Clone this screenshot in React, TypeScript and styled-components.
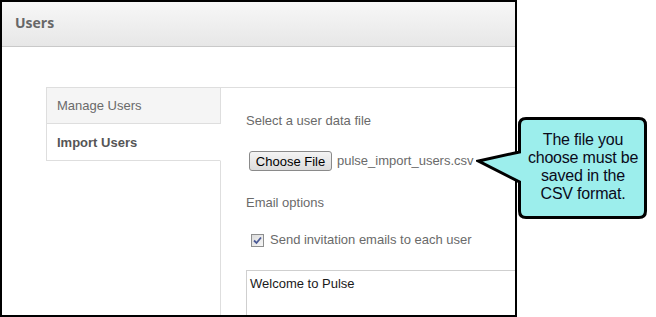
import styled, { createGlobalStyle } from 'styled-components';

const GlobalStyle = createGlobalStyle`
	html, body {
		margin: 0;
		padding: 0;
		background: #fff;
	}
	body {
		font-family: 'Liberation Sans', Arial, sans-serif;
	}
`;

const tabs = [
	{ label: 'Manage Users', active: false },
	{ label: 'Import Users', active: true },
];

function CheckMark() {
	return (
		<svg width='9' height='9' viewBox='0 0 9 9'>
			<path
				d='M1 4.5 L3.5 7 L8 1.5'
				fill='none'
				stroke='#4b5a96'
				strokeWidth='1.8'
			/>
		</svg>
	);
}

function CalloutShape() {
	return (
		<svg width='176' height='112' viewBox='0 0 176 112'>
			<path
				d='M50 6.5 H163 Q169.5 6.5 169.5 13 V99 Q169.5 105.5 163 105.5 H50 Q43.5 105.5 43.5 99 V70 L2.5 49 L43.5 40 V13 Q43.5 6.5 50 6.5 Z'
				fill='#9ceeec'
				stroke='#000'
				strokeWidth='3'
				strokeLinejoin='miter'
			/>
		</svg>
	);
}

export default function App() {
	return (
		<>
			<GlobalStyle />
			<Page>
				<Frame>
					<Header>Users</Header>
					<Body>
						<TabList>
							{tabs.map((tab) => (
								<Tab key={tab.label} $active={tab.active}>
									{tab.label}
								</Tab>
							))}
						</TabList>
						<Panel>
							<Label>Select a user data file</Label>
							<FileRow>
								<FileButton type='button'>Choose File</FileButton>
								<FileName>pulse_import_users.csv</FileName>
							</FileRow>
							<SectionLabel>Email options</SectionLabel>
							<CheckRow>
								<CheckBox>
									<CheckMark />
								</CheckBox>
								Send invitation emails to each user
							</CheckRow>
							<Message readOnly defaultValue='Welcome to Pulse' />
						</Panel>
					</Body>
				</Frame>
				<Callout>
					<CalloutShape />
					<CalloutText>
						The file you
						<br />
						choose must be
						<br />
						saved in the
						<br />
						CSV format.
					</CalloutText>
				</Callout>
			</Page>
		</>
	);
}

const Page = styled.div`
	position: relative;
	width: 656px;
	height: 317px;
	overflow: hidden;
`;

const Frame = styled.div`
	box-sizing: border-box;
	width: 517px;
	height: 317px;
	border: 2px solid #000;
	overflow: hidden;
	display: flex;
	flex-direction: column;
`;

const Header = styled.div`
	box-sizing: border-box;
	flex-shrink: 0;
	height: 45px;
	padding: 0 0 3px 13px;
	display: flex;
	align-items: center;
	background: linear-gradient(#f7f7f7, #e7e7e7);
	border-bottom: 1px solid #c9c9c9;
	font-family: 'Open Sans', sans-serif;
	font-weight: 700;
	font-size: 14px;
	color: #676767;
`;

const Body = styled.div`
	flex: 1;
	min-height: 0;
	display: flex;
	padding: 40px 0 0 44px;
`;

const TabList = styled.div`
	width: 175px;
	flex-shrink: 0;
	display: flex;
	flex-direction: column;
`;

const Tab = styled.div<{ $active: boolean }>`
	position: relative;
	box-sizing: border-box;
	flex-shrink: 0;
	height: 37px;
	padding-left: 10px;
	display: flex;
	align-items: center;
	border: 1px solid #dedede;
	border-top: ${(p) => (p.$active ? 'none' : '1px solid #dedede')};
	border-right-color: ${(p) => (p.$active ? '#fff' : '#dedede')};
	background: ${(p) => (p.$active ? '#fff' : '#f5f5f5')};
	z-index: ${(p) => (p.$active ? 1 : 0)};
	font-size: 13px;
	font-weight: ${(p) => (p.$active ? 700 : 400)};
	color: ${(p) => (p.$active ? '#555' : '#6a6a6a')};
`;

const Panel = styled.div`
	flex: 1;
	margin-left: -1px;
	padding: 25px 0 0 25px;
	border-top: 1px solid #dedede;
	border-left: 1px solid #dedede;
	display: flex;
	flex-direction: column;
	align-items: flex-start;
	font-size: 13px;
	line-height: 16px;
	color: #6a6a6a;
`;

const Label = styled.div``;

const FileRow = styled.div`
	margin-top: 22px;
	display: flex;
	align-items: center;
	gap: 5px;
	padding-left: 3px;
`;

const FileButton = styled.button`
	box-sizing: border-box;
	height: 20px;
	width: 83px;
	padding: 0;
	border: 1px solid #8a8a8a;
	border-radius: 3px;
	background: linear-gradient(#f4f4f4, #dcdcdc);
	font-family: 'Liberation Sans', Arial, sans-serif;
	font-size: 13px;
	color: #000;
`;

const FileName = styled.span``;

const SectionLabel = styled.div`
	margin-top: 24px;
`;

const CheckRow = styled.label`
	margin-top: 21px;
	display: flex;
	align-items: center;
	gap: 6px;
	padding-left: 5px;
`;

const CheckBox = styled.span`
	box-sizing: border-box;
	width: 13px;
	height: 13px;
	display: flex;
	align-items: center;
	justify-content: center;
	border: 1px solid #8e8f8f;
	background: linear-gradient(135deg, #dcdcdc, #f6f6f6);
`;

const Message = styled.textarea`
	box-sizing: border-box;
	flex-shrink: 0;
	margin-top: 22px;
	width: 320px;
	height: 90px;
	padding: 5px 3px;
	border: 1px solid #cfcfcf;
	border-radius: 0;
	resize: none;
	outline: none;
	font-family: 'Liberation Sans', Arial, sans-serif;
	font-size: 13px;
	line-height: 16px;
	color: #1a1a1a;
`;

const Callout = styled.div`
	position: absolute;
	left: 476px;
	top: 112px;
	width: 176px;
	height: 112px;
`;

const CalloutText = styled.div`
	position: absolute;
	left: 44px;
	top: 19px;
	width: 126px;
	text-align: center;
	font-family: 'Liberation Sans', Arial, sans-serif;
	font-size: 16px;
	line-height: 18px;
	letter-spacing: -0.2px;
	color: #0a0a1a;
`;
